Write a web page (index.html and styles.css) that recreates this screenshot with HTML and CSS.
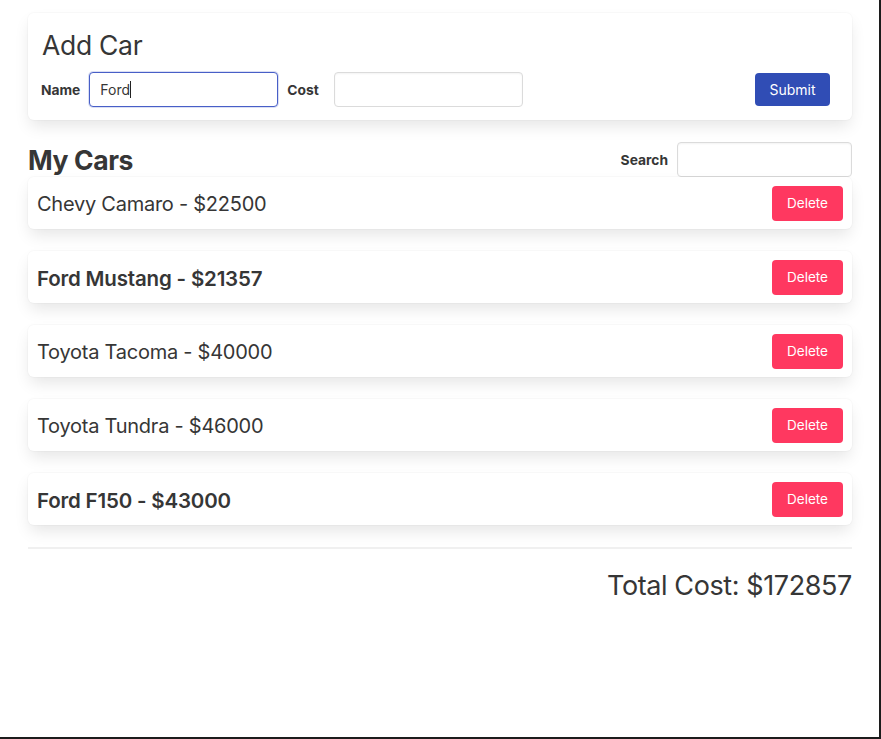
FILE: index.html
```html
<!DOCTYPE html>
<html lang="en">
<head>
<meta charset="utf-8">
<title>Cars</title>
<link rel="stylesheet" href="styles.css">
</head>
<body>
<div class="frame">
  <div class="container">
    <section class="box add-card">
      <h1 class="add-title">Add Car</h1>
      <form class="add-form">
        <label class="label name-label">Name</label>
        <div class="input focused">Ford<span class="caret"></span></div>
        <label class="label cost-label">Cost</label>
        <div class="input"></div>
        <button type="button" class="btn submit">Submit</button>
      </form>
    </section>

    <div class="list-head">
      <h2 class="list-title">My Cars</h2>
      <div class="search">
        <label class="label">Search</label>
        <div class="input search-input"></div>
      </div>
    </div>

    <ul class="cars">
      <li class="box car"><span class="car-name">Chevy Camaro - $22500</span><button type="button" class="btn delete">Delete</button></li>
      <li class="box car"><span class="car-name bold">Ford Mustang - $21357</span><button type="button" class="btn delete">Delete</button></li>
      <li class="box car"><span class="car-name">Toyota Tacoma - $40000</span><button type="button" class="btn delete">Delete</button></li>
      <li class="box car"><span class="car-name">Toyota Tundra - $46000</span><button type="button" class="btn delete">Delete</button></li>
      <li class="box car"><span class="car-name bold">Ford F150 - $43000</span><button type="button" class="btn delete">Delete</button></li>
    </ul>

    <hr class="divider">
    <div class="total">Total Cost: $172857</div>
  </div>
</div>
</body>
</html>
```

FILE: styles.css
```css
* { box-sizing: border-box; }
html, body { margin: 0; padding: 0; background: #fff; }
body {
  font-family: Inter, "Noto Sans", "Liberation Sans", sans-serif;
  color: #363636;
}
.frame {
  width: 881px;
  height: 739px;
  border-right: 2px solid #1c1c1c;
  border-bottom: 2px solid #1c1c1c;
  overflow: hidden;
}
.container {
  padding: 13px 27px 0 28px;
}
.box {
  background: #fff;
  border-radius: 6px;
  box-shadow: 0 8px 16px -2px rgba(10,10,10,0.1), 0 0 0 1px rgba(10,10,10,0.02);
}
.add-card {
  height: 107px;
  padding: 16px 22px 0 13px;
}
.add-title {
  margin: 0;
  font-size: 26.5px;
  line-height: 32px;
  font-weight: 400;
  letter-spacing: -0.3px;
  padding-left: 1px;
}
.add-form {
  margin-top: 11px;
  display: flex;
  align-items: center;
  height: 35px;
}
.label {
  font-size: 13.8px;
  font-weight: 700;
  color: #363636;
}
.name-label { margin-right: 9px; }
.cost-label { margin-left: 9px; margin-right: 15px; }
.input {
  width: 189px;
  height: 35px;
  border: 1px solid #dbdbdb;
  border-radius: 4px;
  background: #fff;
  font-size: 14px;
  line-height: 33px;
  padding: 0 10px;
  color: #363636;
  box-shadow: inset 0 1px 2px rgba(10,10,10,0.05);
}
.input.focused {
  border-color: #485fc7;
  box-shadow: 0 0 0 1px rgba(72,95,199,0.2);
}
.caret {
  display: inline-block;
  width: 1px;
  height: 17px;
  background: #222;
  vertical-align: -3px;
}
.btn {
  border: none;
  border-radius: 4px;
  color: #fff;
  font-family: inherit;
  font-size: 14px;
  cursor: pointer;
}
.submit {
  margin-left: auto;
  width: 75px;
  height: 33px;
  background: #304db5;
}
.list-head {
  margin-top: 22px;
  height: 35px;
  display: flex;
  align-items: center;
  justify-content: space-between;
}
.list-title {
  margin: 0;
  font-size: 26.5px;
  font-weight: 700;
  letter-spacing: -0.4px;
}
.search {
  display: flex;
  align-items: center;
  gap: 9px;
}
.search-input { width: 175px; }
.cars {
  list-style: none;
  margin: 0;
  padding: 0;
  display: flex;
  flex-direction: column;
  gap: 22px;
}
.car {
  height: 52px;
  display: flex;
  align-items: center;
  justify-content: space-between;
  padding: 0 9px;
}
.car-name {
  font-size: 20px;
  font-weight: 400;
  letter-spacing: -0.25px;
  padding-top: 2px;
}
.car-name.bold { font-size: 20.5px; font-weight: 600; letter-spacing: -0.18px; }
.delete {
  width: 71px;
  height: 35px;
  background: #ff3860;
  font-size: 13.5px;
}
.divider {
  margin: 22px 0 0 0;
  border: none;
  height: 2px;
  background: #f0f0f0;
}
.total {
  margin-top: 20px;
  text-align: right;
  font-size: 27px;
  font-weight: 400;
  letter-spacing: -0.4px;
  line-height: 34px;
}
```
